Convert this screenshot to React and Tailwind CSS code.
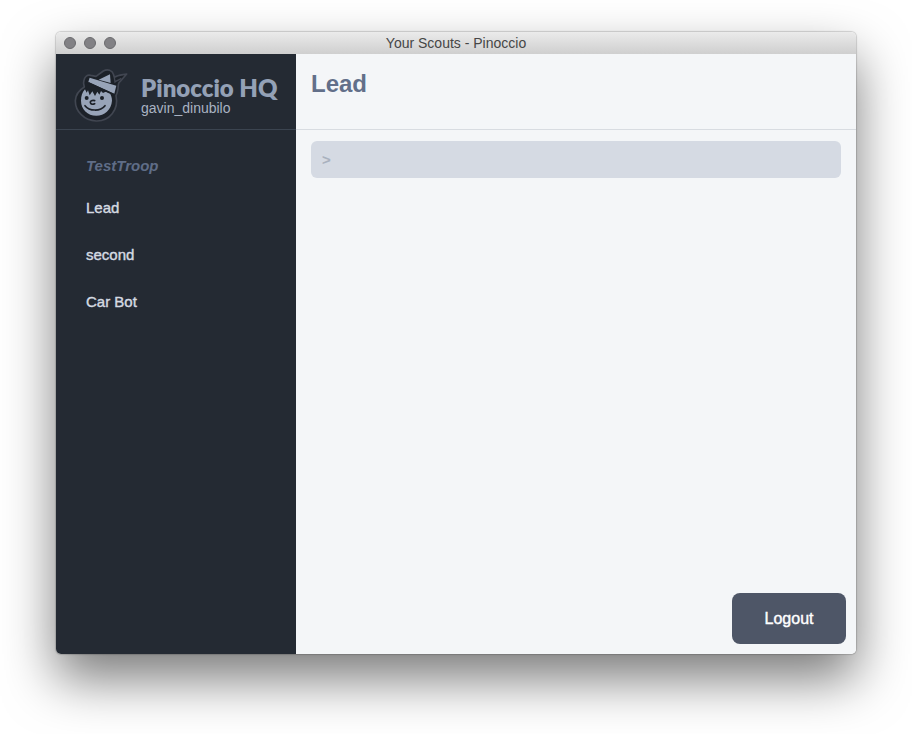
const scouts = ["Lead", "second", "Car Bot"];

function Logo() {
  return (
    <svg viewBox="24 24 162 168" className="h-14 w-[54px] shrink-0" aria-hidden="true">
      <path
        d="M55 81 C54 75 51 69 54 60 C56 50 64 43 74 46 L90 49 L112 33 C125 26 139 31 142 42 L145 52 C156 45 168 45 182 42 C174 51 168 60 159 68 C155 75 158 82 155 91 C154 98 152 103 150 107 C159 150 130 184 91 183 C54 182 28 154 28 122 C29 104 40 90 55 81 Z"
        fill="#1c2128"
        stroke="#414651"
        strokeWidth="5"
        strokeLinejoin="round"
      />
      <path d="M145 53 L147 66 C153 62 159 60 166 55" fill="none" stroke="#414651" strokeWidth="4" />
      <path
        d="M57 88 L62 98 L66 91 L71 106 L79 94 L87 108 L94 95 L100 104 L105 93 L111 99 L119 95 L131 98 C135 105 138 113 138 122 C136 149 115 167 91 167 C65 167 45 148 45 122 C45 108 49 96 57 88 Z"
        fill="#98a4b8"
      />
      <path d="M71 53 L151 77 L145 101 L67 66 Z" fill="#98a4b8" />
      <path d="M68 69 L144 104" fill="none" stroke="#1c2128" strokeWidth="5" />
      <path d="M98 59 L132 43 L134 69 Z" fill="#98a4b8" />
      <circle cx="62" cy="114" r="6" fill="#1c2128" />
      <circle cx="108" cy="114" r="6" fill="#1c2128" />
      <path d="M86 122 C78 120 72 123 73 128 C74 133 80 134 86 131" fill="none" stroke="#1c2128" strokeWidth="5" strokeLinecap="round" />
      <path d="M57 137 C70 154 103 155 117 137" fill="none" stroke="#1c2128" strokeWidth="5" strokeLinecap="round" />
    </svg>
  );
}

function TitleBar() {
  return (
    <header className="grid h-[22px] shrink-0 grid-cols-[1fr_auto_1fr] items-center bg-linear-to-b from-[#ebebeb] to-[#cfcfcf] px-2">
      <div className="flex gap-2">
        <button aria-label="Close" className="size-3 rounded-full border border-[#6b6b6e] bg-[#828185]" />
        <button aria-label="Minimize" className="size-3 rounded-full border border-[#6b6b6e] bg-[#828185]" />
        <button aria-label="Zoom" className="size-3 rounded-full border border-[#6b6b6e] bg-[#828185]" />
      </div>
      <p className="text-sm leading-5 text-[#464646]">Your Scouts - Pinoccio</p>
    </header>
  );
}

function Sidebar() {
  return (
    <aside className="flex w-60 shrink-0 flex-col bg-[#242a33]">
      <div className="flex h-[76px] items-center gap-[13px] border-b border-[#3b4450] pt-2 pl-[18px]">
        <Logo />
        <div>
          <h1 className="font-[Lato,sans-serif] text-2xl leading-6 font-extrabold whitespace-nowrap text-[#94a1b6]">Pinoccio HQ</h1>
          <p className="text-sm leading-4 text-[#a9b3c2]">gavin_dinubilo</p>
        </div>
      </div>
      <nav className="px-[30px] pt-6">
        <h2 className="text-[15px] leading-6 font-bold text-[#5f6d87] italic">TestTroop</h2>
        <ul className="flex flex-col gap-[23px] pt-[18px]">
          {scouts.map((name) => (
            <li key={name} className="leading-6">
              <a href="#" className="text-[15px] text-[#d5dae2] [-webkit-text-stroke:0.4px_#d5dae2]">{name}</a>
            </li>
          ))}
        </ul>
      </nav>
    </aside>
  );
}

function Console() {
  return (
    <main className="flex min-w-0 flex-1 flex-col bg-[#f4f6f8]">
      <div className="h-[76px] shrink-0 border-b border-[#d8dce1] px-[15px] pt-[14px]">
        <h2 className="text-2xl leading-8 font-bold text-[#626f89]">Lead</h2>
      </div>
      <div className="px-[15px] pt-[11px]">
        <input
          aria-label="Command"
          placeholder=">"
          className="block h-[37px] w-full rounded-md bg-[#d5dae3] px-[11px] text-[15px] font-bold text-[#626f89] outline-none placeholder:text-[#a9b1be]"
        />
      </div>
      <div className="mt-auto flex justify-end p-[10px]">
        <button className="h-[51px] w-[114px] rounded-lg bg-[#4e5667] text-base text-white [-webkit-text-stroke:0.4px_white]">
          Logout
        </button>
      </div>
    </main>
  );
}

export default function App() {
  return (
    <div className="flex min-h-screen flex-col overflow-hidden bg-white px-14 pt-8 pb-20 font-['Liberation_Sans',Arial,sans-serif]">
      <div className="flex flex-1 flex-col rounded-[5px] shadow-[0_0_1px_1px_rgba(0,0,0,0.16),0_25px_52px_rgba(0,0,0,0.52)]">
        <div className="flex flex-1 flex-col overflow-hidden rounded-[5px]">
          <TitleBar />
          <div className="flex flex-1">
            <Sidebar />
            <Console />
          </div>
        </div>
      </div>
    </div>
  );
}
